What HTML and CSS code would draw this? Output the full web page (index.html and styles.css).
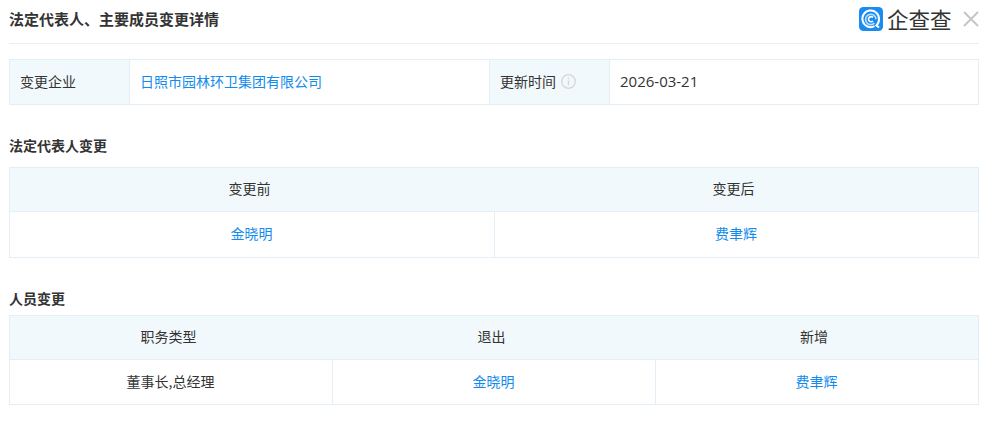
FILE: index.html
```html
<!DOCTYPE html>
<html lang="zh">
<head>
<meta charset="utf-8">
<title>法定代表人、主要成员变更详情</title>
<link rel="stylesheet" href="styles.css">
</head>
<body>
<div class="page">
  <header class="head">
    <h1 class="title">法定代表人、主要成员变更详情</h1>
    <div class="brand">
      <svg class="logo" width="24" height="24" viewBox="0 0 24 24">
        <rect width="24" height="24" rx="4.5" fill="#1a8cf0"/>
        <path d="M15.5 19.2A8.3 8.3 0 1 1 20 12.2c0 2.6-1 4.8-2.6 6.2l2.6 2.2" fill="none" stroke="#fff" stroke-width="2"/>
        <path d="M15.4 16.2A5.2 5.2 0 1 1 17 12.2" fill="none" stroke="#bfe0fb" stroke-width="1.6"/>
        <path d="M14 10.4a2.6 2.6 0 1 0 0 3.6" fill="none" stroke="#fff" stroke-width="1.6"/>
      </svg>
      <span class="brand-name">企查查</span>
      <svg class="close" width="16" height="16" viewBox="0 0 16 16">
        <path d="M1 1l14 14M15 1L1 15" stroke="#c4c4c4" stroke-width="1.8" fill="none"/>
      </svg>
    </div>
  </header>

  <div class="info">
    <div class="cell label">变更企业</div>
    <div class="cell"><a class="link">日照市园林环卫集团有限公司</a></div>
    <div class="cell label">更新时间
      <svg class="tip" width="15" height="15" viewBox="0 0 15 15">
        <circle cx="7.5" cy="7.5" r="6.8" fill="none" stroke="#d6d6d6" stroke-width="1.3"/>
        <path d="M7.5 6.4v4.8M7.5 3.6v1.6" stroke="#d6d6d6" stroke-width="1.4" fill="none"/>
      </svg>
    </div>
    <div class="cell date">2026-03-21</div>
  </div>

  <h2 class="section">法定代表人变更</h2>
  <div class="grid two">
    <div class="th">变更前</div>
    <div class="th">变更后</div>
    <div class="td"><a class="link">金晓明</a></div>
    <div class="td"><a class="link">费聿辉</a></div>
  </div>

  <h2 class="section section-tight">人员变更</h2>
  <div class="grid three">
    <div class="th">职务类型</div>
    <div class="th">退出</div>
    <div class="th">新增</div>
    <div class="td">董事长,总经理</div>
    <div class="td"><a class="link">金晓明</a></div>
    <div class="td"><a class="link">费聿辉</a></div>
  </div>
</div>
</body>
</html>
```

FILE: styles.css
```css
* { box-sizing: border-box; }
html, body { margin: 0; padding: 0; background: #fff; }
body {
  font-family: "Noto Sans CJK SC", "Liberation Sans", sans-serif;
  font-size: 14px;
  color: #333;
}
.page { width: 990px; height: 430px; padding: 0 11px 0 9px; overflow: hidden; }
.head {
  height: 44px;
  border-bottom: 1px solid #eee;
  display: flex;
  align-items: center;
  justify-content: space-between;
  padding-bottom: 5px;
}
.title { margin: 0; font-size: 15px; font-weight: 700; line-height: 22px; color: #333; }
.brand { display: flex; align-items: center; }
.logo { margin-right: 4px; }
.brand-name { font-size: 21.5px; font-weight: 400; line-height: 24px; color: #333; width: 66px; white-space: nowrap; }
.close { margin-left: 10px; }

.info {
  margin-top: 15px;
  height: 46px;
  display: grid;
  grid-template-columns: 120px 360px 120px 1fr;
  border: 1px solid #e4eef6;
}
.cell {
  display: flex;
  align-items: center;
  padding: 0 10px 2px;
  border-right: 1px solid #e4eef6;
  line-height: 22px;
}
.cell:last-child { border-right: 0; }
.label { background: #f2f9fc; }
.date { font-family: "Open Sans", "Liberation Sans", sans-serif; font-size: 15px; }
.tip { margin-left: 5px; }
.link { color: #128bed; }

.section { margin: 30px 0 12px; font-size: 14px; font-weight: 700; line-height: 20px; color: #333; }
.section-tight { margin-bottom: 7px; }

.grid { display: grid; border: 1px solid #e4eef6; border-bottom: 0; }
.two { grid-template-columns: 485px 1fr; }
.three { grid-template-columns: 323px 323px 1fr; }
.th, .td {
  display: flex;
  align-items: center;
  justify-content: center;
  line-height: 22px;
  border-bottom: 1px solid #e4eef6;
  padding-bottom: 3px;
}
.th { height: 44px; background: #f2f9fc; padding-right: 6px; }
.td { height: 46px; border-right: 1px solid #e4eef6; padding-right: 1px; }
.three .td { height: 45px; }
.td:last-child { border-right: 0; }
```
